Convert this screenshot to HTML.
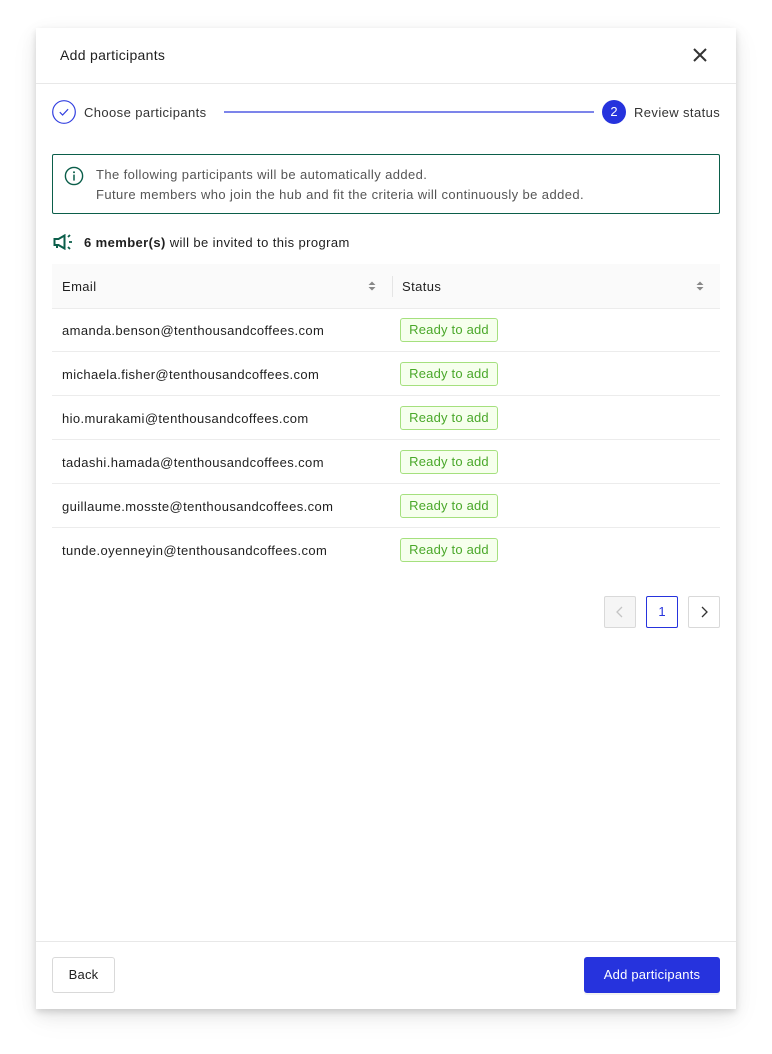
<!DOCTYPE html>
<html><head><style>
*{box-sizing:border-box;margin:0;padding:0}
body{width:772px;height:1054px;background:#fff;font-family:"Liberation Sans",sans-serif;color:#1f1f1f;position:relative;overflow:hidden}
.a{position:absolute}
.modal{left:36px;top:28px;width:700px;height:981px;background:#fff;box-shadow:0 6px 16px rgba(0,0,0,.08),0 3px 6px rgba(0,0,0,.12),0 9px 28px rgba(0,0,0,.05)}
.t{font-size:13px;white-space:nowrap;letter-spacing:0.4px}
.row{left:52px;width:668px;height:44px;border-bottom:1px solid #ececec}
.row .e{position:absolute;left:10px;top:15px;font-size:13px;color:#1f1f1f;letter-spacing:0.4px}
.badge{position:absolute;left:348px;top:10px;width:98px;height:24px;border:1px solid #a5e07e;background:#f6ffed;color:#4aa82a;border-radius:3px;font-size:13px;text-align:center;line-height:22px;letter-spacing:0.2px}
.pg{width:32px;height:32px;border:1px solid #d9d9d9;border-radius:2px;top:596px;text-align:center;line-height:30px;font-size:13px}
</style></head><body>
<div class="a modal"></div>
<div class="a t" style="left:60px;top:47px;font-size:14px;color:#1f1f1f;letter-spacing:0.3px">Add participants</div>
<svg class="a" style="left:692px;top:47px" width="16" height="16" viewBox="0 0 16 16"><path d="M2 2L14 14M14 2L2 14" stroke="#333" stroke-width="2"/></svg>
<div class="a" style="left:36px;top:83px;width:700px;height:1px;background:#e8e8e8"></div>

<svg class="a" style="left:52px;top:100px" width="24" height="24" viewBox="0 0 24 24"><circle cx="12" cy="12" r="11.3" fill="none" stroke="#3340e0" stroke-width="1.2"/><path d="M7.8 12.2l2.8 2.8 5.5-5.8" fill="none" stroke="#3340e0" stroke-width="1.2"/></svg>
<div class="a t" style="left:84px;top:105px;color:#333">Choose participants</div>
<div class="a" style="left:224px;top:111px;width:370px;height:1.5px;background:#7c84ea"></div>
<div class="a" style="left:602px;top:100px;width:24px;height:24px;border-radius:50%;background:#2633dd;color:#fff;font-size:13px;text-align:center;line-height:24px">2</div>
<div class="a t" style="left:634px;top:105px;color:#333">Review status</div>

<div class="a" style="left:52px;top:154px;width:668px;height:60px;border:1px solid #0b5e4a;border-radius:2px"></div>
<svg class="a" style="left:64px;top:166px" width="20" height="20" viewBox="0 0 20 20"><circle cx="10" cy="10" r="8.6" fill="none" stroke="#0b5e4a" stroke-width="1.4"/><circle cx="10" cy="6.3" r="1" fill="#0b5e4a"/><path d="M10 8.6v6" stroke="#0b5e4a" stroke-width="1.5"/></svg>
<div class="a t" style="left:96px;top:167px;color:#555">The following participants will be automatically added.</div>
<div class="a t" style="left:96px;top:187px;color:#555">Future members who join the hub and fit the criteria will continuously be added.</div>

<svg class="a" style="left:53px;top:234px" width="22" height="16" viewBox="0 0 22 16"><path d="M1.5 5h4l6-3.5v13L5.5 11h-4z" fill="none" stroke="#0b5e4a" stroke-width="2"/><path d="M4 11v3" stroke="#0b5e4a" stroke-width="2"/><path d="M15 3l2-2M16 8h3M15 13l2 2" stroke="#0b5e4a" stroke-width="1.8"/></svg>
<div class="a t" style="left:84px;top:235px;color:#1f1f1f"><b>6 member(s)</b> will be invited to this program</div>

<div class="a" style="left:52px;top:264px;width:668px;height:45px;background:#fafafa;border-bottom:1px solid #ececec"></div>
<div class="a t" style="left:62px;top:279px;font-weight:500;color:#1f1f1f">Email</div>
<div class="a" style="left:392px;top:276px;width:1px;height:21px;background:#e5e5e5"></div>
<div class="a t" style="left:402px;top:279px;color:#1f1f1f">Status</div>
<svg class="a" style="left:367px;top:280px" width="10" height="12" viewBox="0 0 10 12"><path d="M1.5 5L5 1.5 8.5 5zM1.5 7L5 10.5 8.5 7z" fill="#888"/></svg>
<svg class="a" style="left:695px;top:280px" width="10" height="12" viewBox="0 0 10 12"><path d="M1.5 5L5 1.5 8.5 5zM1.5 7L5 10.5 8.5 7z" fill="#888"/></svg>

<div class="a row" style="top:308px"><span class="e">amanda.benson@tenthousandcoffees.com</span><span class="badge">Ready to add</span></div>
<div class="a row" style="top:352px"><span class="e">michaela.fisher@tenthousandcoffees.com</span><span class="badge">Ready to add</span></div>
<div class="a row" style="top:396px"><span class="e">hio.murakami@tenthousandcoffees.com</span><span class="badge">Ready to add</span></div>
<div class="a row" style="top:440px"><span class="e">tadashi.hamada@tenthousandcoffees.com</span><span class="badge">Ready to add</span></div>
<div class="a row" style="top:484px"><span class="e">guillaume.mosste@tenthousandcoffees.com</span><span class="badge">Ready to add</span></div>
<div class="a row" style="top:528px;border-bottom:none"><span class="e">tunde.oyenneyin@tenthousandcoffees.com</span><span class="badge">Ready to add</span></div>

<div class="a pg" style="left:604px;background:#f5f5f5"><svg width="30" height="30" viewBox="0 0 30 30"><path d="M17 10l-5 5 5 5" fill="none" stroke="#c4c4c4" stroke-width="1.3"/></svg></div>
<div class="a pg" style="left:646px;border-color:#2633dd;color:#2633dd">1</div>
<div class="a pg" style="left:688px"><svg width="30" height="30" viewBox="0 0 30 30"><path d="M13 10l5 5-5 5" fill="none" stroke="#333" stroke-width="1.3"/></svg></div>

<div class="a" style="left:36px;top:941px;width:700px;height:1px;background:#e8e8e8"></div>
<div class="a t" style="left:52px;top:957px;width:63px;height:36px;border:1px solid #d9d9d9;border-radius:3px;text-align:center;line-height:34px;letter-spacing:0.2px">Back</div>
<div class="a t" style="left:584px;top:957px;width:136px;height:36px;background:#2633dd;color:#fff;border-radius:3px;text-align:center;line-height:36px;box-shadow:0 2px 0 rgba(0,0,0,.05);letter-spacing:0.2px">Add participants</div>
</body></html>
